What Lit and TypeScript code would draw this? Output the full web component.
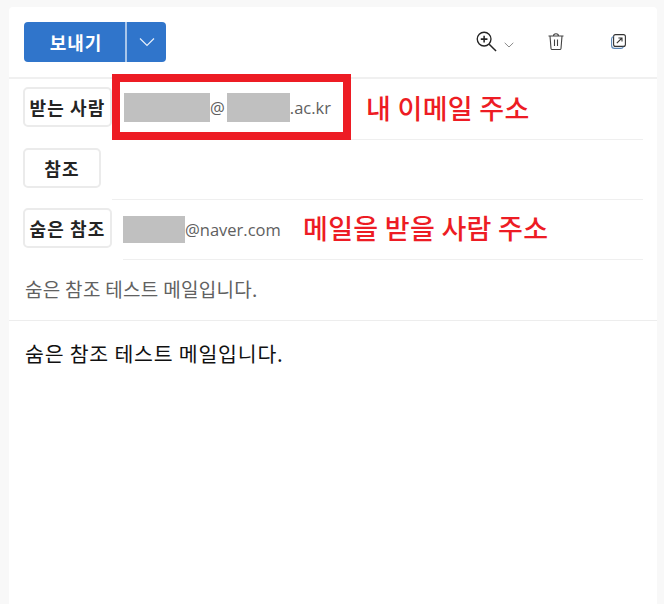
import { LitElement, html, css } from "lit";
import { customElement } from "lit/decorators.js";

@customElement("app-root")
export class AppRoot extends LitElement {
  static styles = css`
    :host { display: block; width: 664px; height: 604px; background: #f8f8f8; overflow: hidden; position: relative;
      font-family: "Noto Sans CJK KR", "Open Sans", sans-serif; color: #242424; }
    .card { margin-left: 9px; width: 648px; height: 597px; position: absolute; top: 7px; background: #fff; border-radius: 4px 4px 0 0; display: flex; flex-direction: column; }
    .toolbar { height: 70px; flex: none; display: flex; align-items: center; padding: 0 15px; border-bottom: 2px solid #f0f0f0; }
    .send { display: flex; height: 40px; width: 142px; border-radius: 4px; overflow: hidden; background: #3075cb; color: #fff; margin-top: -1px; }
    .send .main { width: 101px; padding-left: 3px; box-sizing: border-box; display: flex; align-items: center; justify-content: center; font-size: 18px; font-weight: 700; letter-spacing: 1px; }
    .send .sep { width: 2px; background: #a9c6ea; }
    .send .arrow { flex: 1; display: flex; align-items: center; justify-content: center; }
    .tools { margin-left: auto; display: flex; align-items: center; margin-top: -1px; }
    .tools svg { display: block; }
    .chev { margin-left: 7px; margin-top: 6px; }
    .trash { margin-left: 34px; }
    .pop { margin-left: 47px; margin-right: 16px; }
    .rows { padding-left: 14px; flex: none; }
    .row { height: 60px; display: flex; align-items: flex-start; padding-top: 8px; box-sizing: border-box; }
    .r1 { height: 61px; }
    .chip { height: 40px; box-sizing: border-box; border: 2px solid #ebebeb; border-radius: 5px; background: #fff; display: flex; align-items: center; justify-content: center; font-size: 18px; font-weight: 700; color: #242424; flex: none; white-space: nowrap; letter-spacing: 1.1px; }
    .w1 { width: 89px; } .w2 { width: 78px; }
    .field { align-self: stretch; flex: 1; margin: -8px 14px 0 11px; border-bottom: 1px solid #efefef; display: flex; align-items: center; font-size: 16.5px; color: #606060; font-family: "Open Sans", "Noto Sans CJK KR", sans-serif; }
    .mask { display: inline-block; background: #c0c0c0; flex: none; }
    .m1 { width: 86px; height: 29px; margin-left: 1px; }
    .m2 { width: 63px; height: 29px; margin-left: 2px; }
    .m3 { width: 62px; height: 27px; }
    .f1 { padding-bottom: 3px; box-sizing: border-box; }
    .subject { height: 61px; flex: none; box-sizing: border-box; padding: 0 16px 3px; display: flex; align-items: center; font-size: 19px; letter-spacing: 0.3px; color: #616161; border-bottom: 1px solid #ededed; }
    .body { padding: 17px 16px; font-size: 20.5px; letter-spacing: 0.8px; color: #111; line-height: 30px; }
    .redbox { position: absolute; left: 112px; top: 74px; width: 239px; height: 66px; box-sizing: border-box; border: 8px solid #ed1c24; }
    .note { position: absolute; color: #ed1c24; font-size: 27px; font-weight: 500; white-space: nowrap; line-height: 30px; letter-spacing: 0.3px; }
    .n1 { left: 366px; top: 93px; }
    .n2 { left: 303px; top: 213px; }
  `;

  render() {
    return html`
      <div class="card">
        <div class="toolbar">
          <div class="send">
            <div class="main">보내기</div>
            <div class="sep"></div>
            <div class="arrow">
              <svg width="16" height="10" viewBox="0 0 16 10" fill="none" stroke="#e8f0fb" stroke-width="1.2"><path d="M1 1.5 8 8.5 15 1.5"/></svg>
            </div>
          </div>
          <div class="tools">
            <svg width="21" height="21" viewBox="0 0 22 22" fill="none" stroke="#242424" stroke-width="1.4"><circle cx="8.5" cy="8.5" r="7.2"/><path d="M5 8.5h7M8.5 5v7" stroke-width="1.6"/><path d="M13.8 13.8 21 21" stroke-width="1.6"/></svg>
            <svg class="chev" width="10" height="6" viewBox="0 0 10 6" fill="none" stroke="#8a8a8a" stroke-width="1"><path d="M.7.8 5 5 9.3.8"/></svg>
            <svg class="trash" width="16" height="17" viewBox="0 0 16 17" fill="none" stroke="#424242" stroke-width="1.1"><path d="M.5 3h15M5.5 3c0-3 5-3 5 0M2 3l1 12.5q.2 1 1.2 1h7.6q1 0 1.2-1L14 3M6.5 6.5v6.5M9.5 6.5v6.5"/></svg>
            <svg class="pop" width="15" height="15" viewBox="0 0 15 15" fill="none" stroke="#333" stroke-width="1.1"><rect x="2.6" y=".6" width="11.8" height="11.8" rx="2"/><path d="M2.4 2.4Q.6 3 .6 5v6.4q0 3 3 3H10q1.7 0 2.4-1.7" stroke="#5a86b8"/><path d="M5.8 9.2 11 4M7.4 4H11v3.6"/></svg>
          </div>
        </div>
        <div class="rows">
          <div class="row r1">
            <div class="chip w1">받는 사람</div>
            <div class="field f1"><span class="mask m1"></span>@<span class="mask m2"></span>.ac.kr</div>
          </div>
          <div class="row">
            <div class="chip w2">참조</div>
            <div class="field"></div>
          </div>
          <div class="row">
            <div class="chip w1">숨은 참조</div>
            <div class="field"><span class="mask m3"></span>@naver.com</div>
          </div>
        </div>
        <div class="subject">숨은 참조 테스트 메일입니다.</div>
        <div class="body">숨은 참조 테스트 메일입니다.</div>
      </div>
      <div class="redbox"></div>
      <div class="note n1">내 이메일 주소</div>
      <div class="note n2">메일을 받을 사람 주소</div>
    `;
  }
}
